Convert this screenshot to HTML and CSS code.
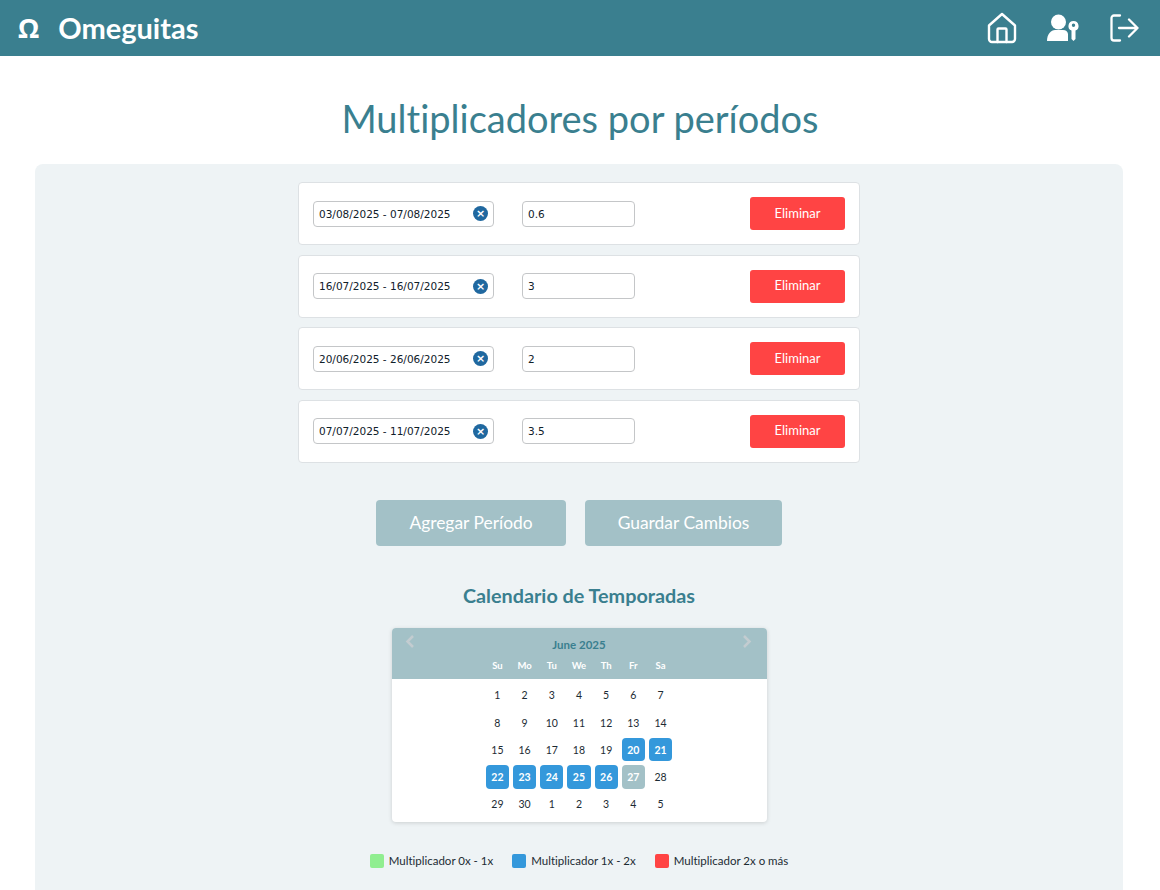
FILE: index.html
```html
<!DOCTYPE html>
<html lang="es">
<head>
    <meta charset="UTF-8">
    <title>Multiplicadores por períodos</title>
    <link rel="stylesheet" href="styles.css">
</head>
<body>

<header class="navbar">
    <div class="brand">
        <span class="brand-logo">Ω</span>
        <span class="brand-name">Omeguitas</span>
    </div>
    <nav class="nav-icons">
        <svg class="icon-home" width="30" height="32" viewBox="0 0 30 32" fill="none" stroke="#fff" stroke-width="2.4" stroke-linejoin="round" stroke-linecap="round">
            <path d="M2 13.5 15 2l13 11.5V27a3 3 0 0 1-3 3H5a3 3 0 0 1-3-3z"/>
            <path d="M10.5 30V17.5a1 1 0 0 1 1-1h7a1 1 0 0 1 1 1V30"/>
        </svg>
        <svg class="icon-user" width="33" height="28" viewBox="0 0 33 28" fill="#fff">
            <circle cx="11.500" cy="8" r="7.500"/>
            <path d="M0 27c0-7 4-11 8-11h8c3 0 4.500 1.500 5 4v7z"/>
            <path fill-rule="evenodd" d="M26.500 7a5 5 0 0 1 2 9.600V25l-2 2-2-2v-8.400A5 5 0 0 1 26.500 7zm0 2.500a1.700 1.700 0 1 0 0 3.400 1.700 1.700 0 0 0 0-3.400z"/>
        </svg>
        <svg class="icon-exit" width="29" height="28" viewBox="0 0 29 28" fill="none" stroke="#fff" stroke-width="2.300" stroke-linecap="round" stroke-linejoin="round">
            <path d="M10 1.500H4a2.500 2.500 0 0 0-2.500 2.500v20A2.500 2.500 0 0 0 4 26.500h6"/>
            <path d="M9 14h18.500M19 5.500 27.500 14 19 22.500"/>
        </svg>
    </nav>
</header>

<h1 class="page-title">Multiplicadores por períodos</h1>

<main class="panel">
    <div class="period-list">
        <div class="period-row">
            <div class="date-input"><span>03/08/2025 - 07/08/2025</span><span class="clear-btn">×</span></div>
            <div class="number-input">0.6</div>
            <button class="delete-btn">Eliminar</button>
        </div>
        <div class="period-row">
            <div class="date-input"><span>16/07/2025 - 16/07/2025</span><span class="clear-btn">×</span></div>
            <div class="number-input">3</div>
            <button class="delete-btn">Eliminar</button>
        </div>
        <div class="period-row">
            <div class="date-input"><span>20/06/2025 - 26/06/2025</span><span class="clear-btn">×</span></div>
            <div class="number-input">2</div>
            <button class="delete-btn">Eliminar</button>
        </div>
        <div class="period-row">
            <div class="date-input"><span>07/07/2025 - 11/07/2025</span><span class="clear-btn">×</span></div>
            <div class="number-input">3.5</div>
            <button class="delete-btn">Eliminar</button>
        </div>
    </div>

    <div class="actions">
        <button class="action-btn add-btn">Agregar Período</button>
        <button class="action-btn save-btn">Guardar Cambios</button>
    </div>

    <h2 class="calendar-title">Calendario de Temporadas</h2>

    <div class="calendar">
        <div class="calendar-head">
            <svg class="nav-arrow nav-prev" width="10" height="13" viewBox="0 0 10 13" fill="none" stroke="#c3ccd0" stroke-width="2.500"><path d="M8 1 2.500 6.500 8 12"/></svg>
            <svg class="nav-arrow nav-next" width="10" height="13" viewBox="0 0 10 13" fill="none" stroke="#c3ccd0" stroke-width="2.500"><path d="M2 1l5.500 5.500L2 12"/></svg>
            <div class="month">June 2025</div>
            <div class="weekdays">
                <span>Su</span><span>Mo</span><span>Tu</span><span>We</span><span>Th</span><span>Fr</span><span>Sa</span>
            </div>
        </div>
        <div class="days">
            <span>1</span><span>2</span><span>3</span><span>4</span><span>5</span><span>6</span><span>7</span>
            <span>8</span><span>9</span><span>10</span><span>11</span><span>12</span><span>13</span><span>14</span>
            <span>15</span><span>16</span><span>17</span><span>18</span><span>19</span><span class="mid">20</span><span class="mid">21</span>
            <span class="mid">22</span><span class="mid">23</span><span class="mid">24</span><span class="mid">25</span><span class="mid">26</span><span class="today">27</span><span>28</span>
            <span>29</span><span>30</span><span>1</span><span>2</span><span>3</span><span>4</span><span>5</span>
        </div>
    </div>

    <div class="legend">
        <div class="legend-item"><span class="swatch swatch-low"></span>Multiplicador 0x - 1x</div>
        <div class="legend-item"><span class="swatch swatch-mid"></span>Multiplicador 1x - 2x</div>
        <div class="legend-item"><span class="swatch swatch-high"></span>Multiplicador 2x o más</div>
    </div>
</main>

</body>
</html>
```

FILE: styles.css
```css
html, body {
    height: 890px;
    overflow: hidden;
}

body {
    font-family: Lato, "Noto Sans", Arial, sans-serif;
    font-variant-ligatures: none;
    margin: 0;
    padding: 0;
    background-color: #fff;
    color: #1c2b33;
}

.navbar {
    height: 56px;
    background-color: #3a7f8f;
    display: flex;
    align-items: center;
    justify-content: space-between;
    padding: 0 21px 0 18px;
    color: #fff;
}

.brand {
    display: flex;
    align-items: center;
    gap: 19px;
    margin-bottom: 2px;
    font-weight: 700;
}

.brand-logo {
    font-family: "Open Sans", sans-serif;
    font-size: 27px;
    font-weight: 700;
}

.brand-name {
    font-size: 29px;
}

.nav-icons {
    display: flex;
    align-items: center;
    gap: 30px;
}

.page-title {
    margin: 37px 0 20px;
    height: 51px;
    line-height: 51px;
    text-align: center;
    font-size: 38px;
    font-weight: 400;
    color: #3a7f8f;
}

.panel {
    box-sizing: border-box;
    margin: 0 37px 0 35px;
    padding: 18px 0 0;
    height: 726px;
    background-color: #eef3f5;
    border-radius: 8px 8px 0 0;
}

.period-list {
    width: 562px;
    margin: 0 auto;
    display: flex;
    flex-direction: column;
    gap: 9.600px;
}

.period-row {
    box-sizing: border-box;
    height: 63px;
    background-color: #fff;
    border: 1px solid #dde1e4;
    border-radius: 4px;
    padding: 0 14px;
    display: flex;
    align-items: center;
}

.date-input, .number-input {
    box-sizing: border-box;
    height: 26px;
    border: 1px solid #c4c6c8;
    border-radius: 4px;
    background-color: #fff;
    display: flex;
    align-items: center;
    font-family: "DejaVu Sans", sans-serif;
    font-size: 10.500px;
    color: #10202a;
}

.date-input {
    width: 181px;
    padding: 0 5px;
    justify-content: space-between;
}

.number-input {
    width: 113px;
    margin-left: 28px;
    padding: 0 5px;
}

.clear-btn {
    width: 15px;
    height: 15px;
    border-radius: 50%;
    background-color: #20689f;
    color: #fff;
    font-size: 11px;
    font-weight: 700;
    line-height: 15px;
    text-align: center;
}

.delete-btn {
    width: 95px;
    height: 33px;
    margin-left: auto;
    border: none;
    border-radius: 3px;
    padding-bottom: 3px;
    background-color: #ff4444;
    color: #fff;
    font-family: inherit;
    font-size: 13px;
}

.actions {
    display: flex;
    justify-content: center;
    gap: 19px;
    margin-top: 37px;
}

.action-btn {
    height: 46px;
    border: none;
    border-radius: 4px;
    background-color: #a3c1c7;
    color: #fff;
    font-family: inherit;
    font-size: 17.400px;
}

.add-btn {
    width: 190px;
}

.save-btn {
    width: 197px;
}

.calendar-title {
    margin: 38px 0 0;
    height: 24px;
    line-height: 22px;
    text-align: center;
    font-size: 19.800px;
    font-weight: 700;
    color: #3a7f8f;
}

.calendar {
    position: relative;
    width: 375px;
    margin: 20px auto 0;
    background-color: #fff;
    border-radius: 4px;
    box-shadow: 0 1px 4px rgba(0, 0, 0, 0.15);
}

.calendar-head {
    height: 51px;
    background-color: #a3c1c7;
    border-radius: 4px 4px 0 0;
    overflow: hidden;
}

.nav-arrow {
    position: absolute;
    top: 7px;
}

.nav-prev {
    left: 13px;
}

.nav-next {
    right: 15px;
}

.month {
    margin-top: 10px;
    text-align: center;
    font-size: 11.500px;
    line-height: 14px;
    font-weight: 700;
    color: #3a7f8f;
}

.weekdays {
    width: 190.400px;
    margin: 8px auto 0;
    display: grid;
    grid-template-columns: repeat(7, 27.200px);
    font-size: 9.500px;
    line-height: 12px;
    font-weight: 700;
    text-align: center;
    color: #fff;
}

.days {
    width: 190.400px;
    margin: 0 auto;
    padding: 3px 0 4px;
    display: grid;
    grid-template-columns: repeat(7, 27.200px);
    grid-auto-rows: 27.200px;
    font-size: 10.500px;
    color: #1c2b33;
}

.days span {
    display: flex;
    align-items: center;
    justify-content: center;
    margin: 2px;
    border-radius: 4px;
}

.days .mid {
    background-color: #3498db;
    color: #fff;
    font-weight: 700;
}

.days .today {
    background-color: #a3c1c7;
    color: #fff;
    font-weight: 700;
}

.legend {
    display: flex;
    justify-content: center;
    gap: 19px;
    margin-top: 32px;
    font-size: 11.500px;
}

.legend-item {
    display: flex;
    align-items: center;
    gap: 5px;
}

.swatch {
    width: 14px;
    height: 14px;
    border-radius: 2px;
}

.swatch-low {
    background-color: #90ee90;
}

.swatch-mid {
    background-color: #3498db;
}

.swatch-high {
    background-color: #ff4444;
}
```
